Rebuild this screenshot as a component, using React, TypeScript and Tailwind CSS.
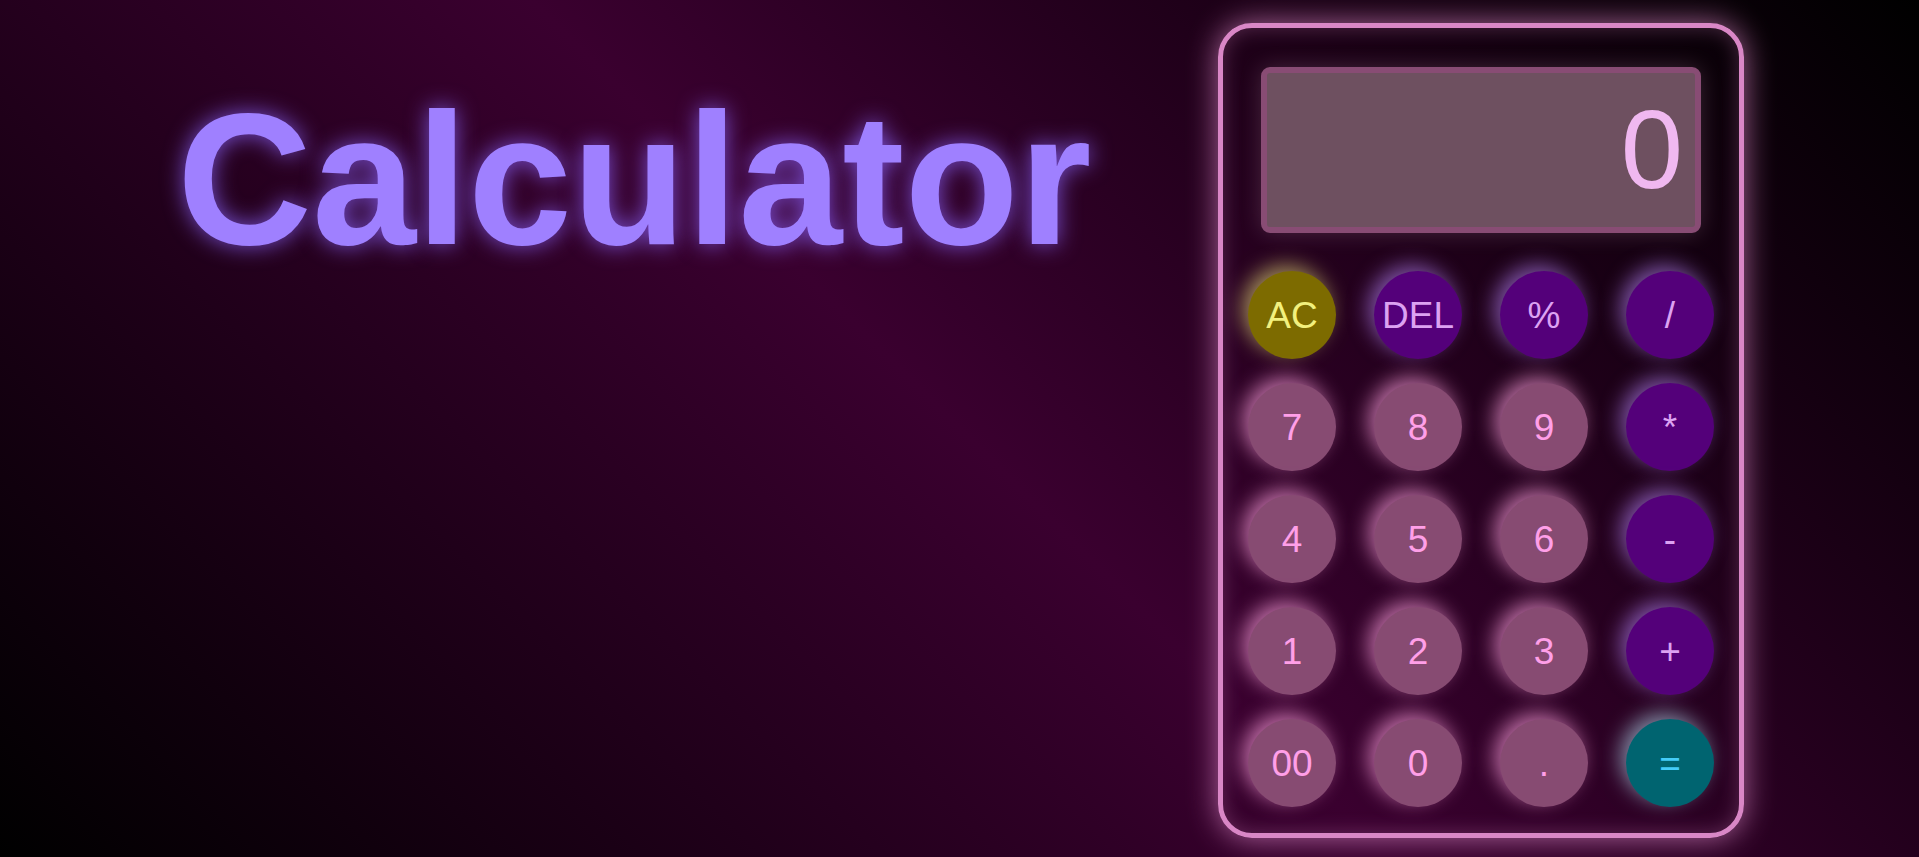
import { useState } from "react";

type Kind = "num" | "op" | "clear" | "eq";

const keys: { label: string; kind: Kind }[] = [
  { label: "AC", kind: "clear" },
  { label: "DEL", kind: "op" },
  { label: "%", kind: "op" },
  { label: "/", kind: "op" },
  { label: "7", kind: "num" },
  { label: "8", kind: "num" },
  { label: "9", kind: "num" },
  { label: "*", kind: "op" },
  { label: "4", kind: "num" },
  { label: "5", kind: "num" },
  { label: "6", kind: "num" },
  { label: "-", kind: "op" },
  { label: "1", kind: "num" },
  { label: "2", kind: "num" },
  { label: "3", kind: "num" },
  { label: "+", kind: "op" },
  { label: "00", kind: "num" },
  { label: "0", kind: "num" },
  { label: ".", kind: "num" },
  { label: "=", kind: "eq" },
];

const styles: Record<Kind, string> = {
  num: "bg-[#874b72] text-[#ff9fe8] shadow-[-6px_-6px_20px_rgba(240,150,210,0.7)]",
  op: "bg-[#54007a] text-[#dca2f2] shadow-[-6px_-6px_20px_rgba(170,120,230,0.65)]",
  clear: "bg-[#7d6b00] text-[#f2f07e] shadow-[-6px_-6px_20px_rgba(230,220,120,0.6)]",
  eq: "bg-[#006470] text-[#45ccf8] shadow-[-6px_-6px_20px_rgba(180,220,240,0.6)]",
};

function calc(expr: string) {
  try {
    const v = Function(`"use strict";return (${expr})`)();
    return Number.isFinite(v) ? String(v) : "Error";
  } catch {
    return "Error";
  }
}

export default function App() {
  const [value, setValue] = useState("0");

  const press = (k: string) => {
    if (k === "AC") return setValue("0");
    if (k === "DEL") return setValue((v) => (v.length > 1 ? v.slice(0, -1) : "0"));
    if (k === "=") return setValue((v) => calc(v.replace(/%/g, "/100")));
    setValue((v) => (v === "0" && k !== "." ? k : v + k));
  };

  return (
    <main className="h-[857px] w-full overflow-hidden flex justify-between items-start pl-[177px] pr-[175px] pt-[23px] bg-[linear-gradient(45deg,#000000_0%,#3a002f_50%,#000000_100%)] font-['Liberation_Sans',Arial,sans-serif]">
      <h1 className="mt-[63px] text-[187px] leading-none font-bold text-[#9f80ff] [text-shadow:0_0_22px_rgba(140,100,255,0.8)]">
        Calculator
      </h1>

      <div className="w-[526px] h-[815px] rounded-[34px] border-[5px] border-[#d987c6] shadow-[0_0_30px_rgba(217,135,198,0.75),inset_0_0_20px_rgba(217,135,198,0.3)] flex flex-col items-center">
        <div className="mt-[39px] w-[440px] h-[166px] rounded-[9px] border-[6px] border-[#884c74] bg-[#6e5060] shadow-[0_0_22px_rgba(255,210,235,0.18)] flex items-center justify-end pr-[12px] overflow-hidden">
          <span className="text-[112px] leading-none text-[#f0b8f0]">{value}</span>
        </div>

        <div className="mt-[38px] grid grid-cols-4 gap-x-[38px] gap-y-[24px]">
          {keys.map((k) => (
            <button
              key={k.label}
              onClick={() => press(k.label)}
              className={`w-[88px] h-[88px] rounded-full flex items-center justify-center text-[37px] leading-none ${styles[k.kind]}`}
            >
              {k.label}
            </button>
          ))}
        </div>
      </div>
    </main>
  );
}
